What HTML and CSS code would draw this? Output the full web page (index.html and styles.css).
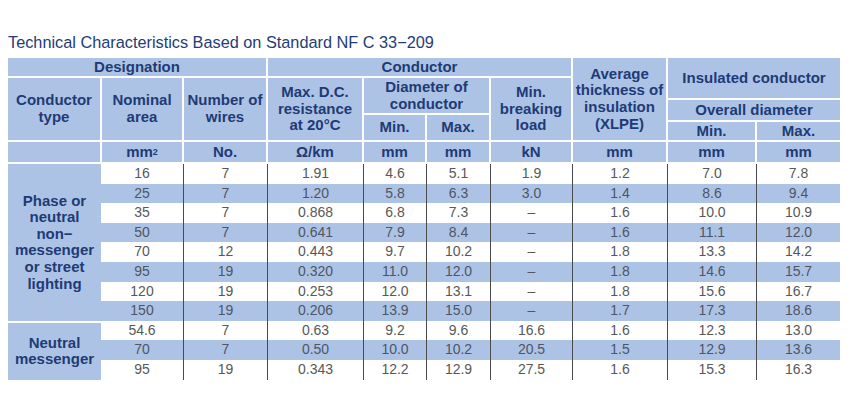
FILE: index.html
```html
<!DOCTYPE html>
<html>
<head>
<meta charset="utf-8">
<link rel="stylesheet" href="styles.css">
</head>
<body>
<h1 class="title">Technical Characteristics Based on Standard NF C 33−209</h1>
<div class="table">
  <div class="head">
    <div class="h c1-4 r1">Designation</div>
    <div class="h c4-8 r1">Conductor</div>
    <div class="h c8 r1-6">Average<br>thickness of<br>insulation<br>(XLPE)</div>
    <div class="h c9-11 r1-3">Insulated conductor</div>
    <div class="h c1 r2-6">Conductor<br>type</div>
    <div class="h c2 r2-6">Nominal<br>area</div>
    <div class="h c3 r2-6">Number of<br>wires</div>
    <div class="h c4 r2-6">Max. D.C.<br>resistance<br>at 20°C</div>
    <div class="h c5-7 r2-4">Diameter of<br>conductor</div>
    <div class="h c7 r2-6">Min.<br>breaking<br>load</div>
    <div class="h c9-11 r3-5">Overall diameter</div>
    <div class="h c5 r4-6">Min.</div>
    <div class="h c6 r4-6">Max.</div>
    <div class="h c9 r5">Min.</div>
    <div class="h c10 r5">Max.</div>
    <div class="h c1 r6"></div>
    <div class="h c2 r6">mm<sup>2</sup></div>
    <div class="h c3 r6">No.</div>
    <div class="h c4 r6">Ω/km</div>
    <div class="h c5 r6">mm</div>
    <div class="h c6 r6">mm</div>
    <div class="h c7 r6">kN</div>
    <div class="h c8 r6">mm</div>
    <div class="h c9 r6">mm</div>
    <div class="h c10 r6">mm</div>
  </div>
  <div class="body">
    <div class="types">
      <div class="type g1">Phase or<br>neutral<br>non−<br>messenger<br>or street<br>lighting</div>
      <div class="type g2">Neutral<br>messenger</div>
    </div>
    <div class="rows">
      <div class="row"><span>16</span><span>7</span><span>1.91</span><span>4.6</span><span>5.1</span><span>1.9</span><span>1.2</span><span>7.0</span><span>7.8</span></div>
      <div class="row alt"><span>25</span><span>7</span><span>1.20</span><span>5.8</span><span>6.3</span><span>3.0</span><span>1.4</span><span>8.6</span><span>9.4</span></div>
      <div class="row"><span>35</span><span>7</span><span>0.868</span><span>6.8</span><span>7.3</span><span>–</span><span>1.6</span><span>10.0</span><span>10.9</span></div>
      <div class="row alt"><span>50</span><span>7</span><span>0.641</span><span>7.9</span><span>8.4</span><span>–</span><span>1.6</span><span>11.1</span><span>12.0</span></div>
      <div class="row"><span>70</span><span>12</span><span>0.443</span><span>9.7</span><span>10.2</span><span>–</span><span>1.8</span><span>13.3</span><span>14.2</span></div>
      <div class="row alt"><span>95</span><span>19</span><span>0.320</span><span>11.0</span><span>12.0</span><span>–</span><span>1.8</span><span>14.6</span><span>15.7</span></div>
      <div class="row"><span>120</span><span>19</span><span>0.253</span><span>12.0</span><span>13.1</span><span>–</span><span>1.8</span><span>15.6</span><span>16.7</span></div>
      <div class="row alt"><span>150</span><span>19</span><span>0.206</span><span>13.9</span><span>15.0</span><span>–</span><span>1.7</span><span>17.3</span><span>18.6</span></div>
      <div class="row"><span>54.6</span><span>7</span><span>0.63</span><span>9.2</span><span>9.6</span><span>16.6</span><span>1.6</span><span>12.3</span><span>13.0</span></div>
      <div class="row alt"><span>70</span><span>7</span><span>0.50</span><span>10.0</span><span>10.2</span><span>20.5</span><span>1.5</span><span>12.9</span><span>13.6</span></div>
      <div class="row"><span>95</span><span>19</span><span>0.343</span><span>12.2</span><span>12.9</span><span>27.5</span><span>1.6</span><span>15.3</span><span>16.3</span></div>
    </div>
  </div>
</div>
</body>
</html>
```
FILE: styles.css
```css
html, body {
  margin: 0;
  padding: 0;
  background: #ffffff;
}
body {
  padding: 1px 10px 0 8px;
  font-family: "Liberation Sans", Arial, sans-serif;
}
.title {
  margin: 32px 0 7px 0;
  font-size: 16.3px;
  font-weight: normal;
  line-height: 18px;
  color: #233d78;
}
.table {
  width: 832px;
}
.head {
  display: grid;
  grid-template-columns: 92px 80px 82px 94px 61px 62px 80px 93px 87px 83px;
  grid-template-rows: 18px 20px 13px 5px 18px 20px;
  gap: 2px;
  background: #ffffff;
}
.h {
  background: #adc3e5;
  color: #1e3b76;
  font-weight: bold;
  font-size: 15px;
  line-height: 16.6px;
  text-align: center;
  display: flex;
  align-items: center;
  justify-content: center;
}
.h sup {
  font-size: 9px;
  line-height: 0;
  vertical-align: 6px;
}
.c1 { grid-column: 1; }
.c2 { grid-column: 2; }
.c3 { grid-column: 3; }
.c4 { grid-column: 4; }
.c5 { grid-column: 5; }
.c6 { grid-column: 6; }
.c7 { grid-column: 7; }
.c8 { grid-column: 8; }
.c9 { grid-column: 9; }
.c10 { grid-column: 10; }
.c1-4 { grid-column: 1 / 4; }
.c4-8 { grid-column: 4 / 8; }
.c5-7 { grid-column: 5 / 7; }
.c9-11 { grid-column: 9 / 11; }
.r1 { grid-row: 1; }
.r5 { grid-row: 5; }
.r6 { grid-row: 6; }
.r1-3 { grid-row: 1 / 3; }
.r1-6 { grid-row: 1 / 6; }
.r2-4 { grid-row: 2 / 4; }
.r2-6 { grid-row: 2 / 6; }
.r3-5 { grid-row: 3 / 5; }
.r4-6 { grid-row: 4 / 6; }
.body {
  display: flex;
  margin-top: 2px;
}
.types {
  width: 93px;
  display: flex;
  flex-direction: column;
}
.type {
  background: #adc3e5;
  color: #1e3b76;
  font-weight: bold;
  font-size: 15px;
  line-height: 16.6px;
  text-align: center;
  display: flex;
  align-items: center;
  justify-content: center;
  box-sizing: border-box;
}
.g1 { height: 156.8px; }
.g2 { height: 58.8px; border-top: 2px solid #ffffff; }
.rows {
  flex: 1;
}
.row {
  display: grid;
  grid-template-columns: 82px 84px 96px 63px 64px 82px 95px 89px 84px;
  height: 19.6px;
  background: #ffffff;
}
.row.alt {
  background: #adc3e5;
}
.row span {
  box-sizing: border-box;
  text-align: center;
  font-size: 14px;
  line-height: 19.6px;
  color: #585858;
  border-left: 1px solid #4a4a4a;
}
.row.alt span {
  color: #4d5566;
}
.row span:first-child {
  border-left: none;
}
```
